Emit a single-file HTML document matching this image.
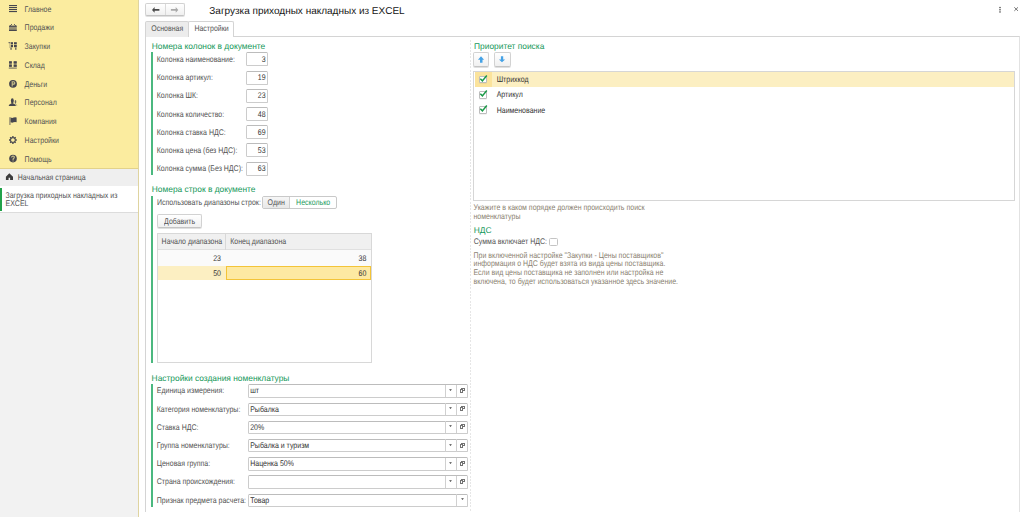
<!DOCTYPE html>
<html><head><meta charset="utf-8">
<style>
*{margin:0;padding:0;box-sizing:border-box}
html,body{width:1024px;height:517px;overflow:hidden;background:#fff;font-family:"Liberation Sans",sans-serif;color:#525252}
.a{position:absolute}
svg{position:absolute;overflow:visible}
.t{position:absolute;white-space:nowrap;font-size:7px;line-height:10px;transform:scaleY(1.18);transform-origin:0 0;text-rendering:geometricPrecision}
.h{position:absolute;white-space:nowrap;font-size:8.4px;line-height:10px;color:#16985a;text-rendering:geometricPrecision}
.ttl{position:absolute;white-space:nowrap;font-size:10px;line-height:12px;color:#161616;text-rendering:geometricPrecision}
.dk{color:#333}
.hint{color:#8a7f70}
.btn{position:absolute;border:1px solid #d2d2d2;border-bottom-color:#c4c4c4;border-radius:2px;background:linear-gradient(#ffffff,#f0f0f0);box-shadow:0 1px 0.5px rgba(0,0,0,.12)}
.box{position:absolute;border:1px solid #cccccc;border-top-color:#bcbcbc;border-radius:1.5px;background:#fff}
</style></head><body>
<div class="a" style="left:0px;top:0px;width:138px;height:517px;background:#f2f2f2"></div>
<div class="a" style="left:138px;top:0px;width:1px;height:517px;background:#dfd4a0"></div>
<div class="a" style="left:0px;top:0px;width:138px;height:168px;background:#fbec9f"></div>
<div class="a" style="left:0px;top:168px;width:138px;height:1px;background:#e3d28a"></div>
<div class="t" style="left:24.6px;top:4.50px;">Главное</div>
<div class="t" style="left:24.6px;top:23.28px;">Продажи</div>
<div class="t" style="left:24.6px;top:42.06px;">Закупки</div>
<div class="t" style="left:24.6px;top:60.84px;">Склад</div>
<div class="t" style="left:24.6px;top:79.62px;">Деньги</div>
<div class="t" style="left:24.6px;top:98.40px;">Персонал</div>
<div class="t" style="left:24.6px;top:117.18px;">Компания</div>
<div class="t" style="left:24.6px;top:135.96px;">Настройки</div>
<div class="t" style="left:24.6px;top:154.74px;">Помощь</div>
<div class="a" style="left:0px;top:169px;width:138px;height:17px;background:#efefef"></div>
<div class="t" style="left:17.8px;top:173.40px;">Начальная страница</div>
<div class="a" style="left:0px;top:186px;width:138px;height:26px;background:#fff"></div>
<div class="a" style="left:0px;top:212px;width:138px;height:1px;background:#dcdcdc"></div>
<div class="a" style="left:0.3px;top:187.5px;width:1.3px;height:23.5px;background:#22a24a"></div>
<div class="t" style="left:5.5px;top:191.20px;">Загрузка приходных накладных из</div>
<div class="t" style="left:5.5px;top:199.40px;">EXCEL</div>

<svg style="left:9px;top:5px" width="8" height="8"><g fill="#46464e"><rect x="0" y="0" width="8" height="1.1"/><rect x="0" y="2" width="8" height="1.1"/><rect x="0" y="4" width="8" height="1.1"/><rect x="0" y="6" width="8" height="1.1"/></g></svg>
<svg style="left:8px;top:23px" width="10" height="9"><g fill="#46464e"><rect x="1" y="2.6" width="7.8" height="1.3"/><rect x="1" y="3.9" width="7.8" height="3.2" opacity=".55"/><rect x="1" y="6.8" width="7.8" height="1.2"/></g><path d="M3.8 1.2 L2.3 2.8 M6.2 1.2 L7.6 2.8" stroke="#46464e" stroke-width="1" fill="none"/></svg>
<svg style="left:8px;top:41px" width="10" height="10"><g fill="#46464e"><rect x="0.5" y="1" width="1.8" height="1.2" opacity=".7"/><rect x="1.3" y="1.5" width="1" height="5.5" opacity=".3"/><rect x="2.8" y="1.2" width="2.2" height="2.2"/><rect x="6" y="1.2" width="2.8" height="2.2"/><rect x="2.8" y="4" width="2.2" height="2.2"/><rect x="6" y="4" width="2.8" height="2.2"/><rect x="2.3" y="6.5" width="1.5" height="2.3" opacity=".75"/><rect x="7" y="6.5" width="1.5" height="2.3" opacity=".75"/></g></svg>
<svg style="left:8px;top:60px" width="10" height="10"><g fill="#46464e"><rect x="1.1" y="1.3" width="2.7" height="5.5" opacity=".6"/><rect x="5.7" y="1.3" width="3" height="5.5" opacity=".6"/><rect x="1.1" y="1.3" width="2.7" height="2"/><rect x="5.7" y="1.3" width="3" height="2"/><rect x="1.1" y="4.9" width="2.7" height="1.9"/><rect x="5.7" y="4.9" width="3" height="1.9"/><rect x="0.8" y="7.5" width="8" height="1.2" opacity=".7"/></g></svg>
<svg style="left:8px;top:79px" width="10" height="10"><circle cx="5" cy="4.8" r="3.9" fill="#46464e"/><path d="M4.2 7.6 V2.7 H5.6 A1.2 1.2 0 0 1 5.6 5.1 H4.2" stroke="#c9c08a" stroke-width="1.1" fill="none"/></svg>
<svg style="left:8px;top:97px" width="10" height="10"><g fill="#46464e"><ellipse cx="4.3" cy="3.5" rx="1.4" ry="2.2"/><rect x="3.3" y="3.5" width="2" height="3.3"/><path d="M0.7 9 Q1 6.8 4.3 6.6 Q7.6 6.8 7.9 9 Z"/><ellipse cx="7.5" cy="4.8" rx="0.8" ry="1.7" opacity=".8"/><path d="M7.2 6.3 L8.8 8.6" stroke="#46464e" stroke-width=".9" opacity=".5"/></g></svg>
<svg style="left:8px;top:116px" width="10" height="10"><g fill="#46464e"><rect x="1.2" y="1.2" width="1.4" height="7.8" opacity=".55"/><path d="M2.6 1.6 Q4.3 2.5 5.6 1.6 Q7 0.8 8.6 1.4 V6.3 Q7 5.5 5.6 6.3 Q4.3 7.1 2.6 6.3 Z"/></g></svg>
<svg style="left:8px;top:135px" width="10" height="10"><g transform="translate(4.9,5)"><circle r="2.4" fill="none" stroke="#46464e" stroke-width="1.1" opacity=".85"/><g stroke="#46464e" stroke-width="1.4"><path d="M0 -3.9 V-2.2 M0 2.2 V3.9 M-3.9 0 H-2.2 M2.2 0 H3.9 M-2.75 -2.75 L-1.5 -1.5 M2.75 2.75 L1.5 1.5 M-2.75 2.75 L-1.5 1.5 M2.75 -2.75 L1.5 -1.5"/></g></g></svg>
<svg style="left:8px;top:154px" width="10" height="10"><circle cx="5" cy="4.6" r="3.8" fill="#46464e"/><path d="M3.6 3.5 Q3.7 2.1 5 2.1 Q6.4 2.2 6.3 3.4 Q6.2 4.3 5.1 4.9 V5.9" stroke="#c9c08a" stroke-width="1.1" fill="none"/><rect x="4.5" y="6.5" width="1.1" height="1" fill="#c9c08a"/></svg>
<svg style="left:5px;top:172px" width="9" height="9"><path d="M4.3 1.3 L8 4.8 V8 H5.1 V5.7 H3.6 V8 H0.9 V4.8 Z" fill="#3c3c3c"/></svg>

<div class="btn" style="left:145px;top:3px;width:40px;height:13px"></div>
<div class="a" style="left:165px;top:4px;width:1px;height:11px;background:#dadada"></div>
<svg style="left:151px;top:6px" width="10" height="8"><path d="M1 3.9 L3.6 1.1 V3 H8.4 V4.8 H3.6 V6.7 Z" fill="#4a4a4a"/></svg>
<svg style="left:170px;top:6px" width="10" height="8"><path d="M8.3 3.9 L5.7 1.1 V3 H0.9 V4.8 H5.7 V6.7 Z" fill="#a9a9a9"/></svg>
<div class="ttl" style="left:209.3px;top:5.60px">Загрузка приходных накладных из EXCEL</div>
<svg style="left:998px;top:6px" width="4" height="8"><g fill="#4a4a4a"><rect x="1.3" y="0.9" width="1.4" height="1.3"/><rect x="1.3" y="3.1" width="1.4" height="1.3"/><rect x="1.3" y="5.3" width="1.4" height="1.3"/></g></svg>
<svg style="left:1013px;top:6px" width="6" height="6"><path d="M1.3 1.3 L5 4.9 M5 1.3 L1.3 4.9" stroke="#555" stroke-width="0.8"/></svg>
<div class="a" style="left:145px;top:36px;width:875px;height:476px;border:1px solid #d4d4d4;border-bottom:none;border-right:1.5px solid #e2e2e2"></div>
<div class="a" style="left:145px;top:21px;width:44px;height:16px;background:#ececec;border:1px solid #d4d4d4;border-bottom:none;border-radius:2px 2px 0 0"></div>
<div class="a" style="left:188px;top:21px;width:46px;height:16px;background:#fff;border:1px solid #d4d4d4;border-bottom:none;border-radius:2px 2px 0 0"></div>
<div class="t" style="left:151.3px;top:24.00px;">Основная</div>
<div class="t" style="left:194.4px;top:24.00px;">Настройки</div>
<div class="h" style="left:151.7px;top:40.90px">Номера колонок в документе</div>
<div class="a" style="left:151px;top:52px;width:2px;height:122.5px;background:#4bb87f"></div>
<div class="t" style="left:156.8px;top:54.90px;">Колонка наименование:</div>
<div class="box" style="left:246px;top:52.30px;width:21.6px;height:14px"></div>
<div class="t" style="left:65.60000000000002px;width:200px;text-align:right;top:54.90px;color:#333">3</div>
<div class="t" style="left:156.8px;top:73.10px;">Колонка артикул:</div>
<div class="box" style="left:246px;top:70.50px;width:21.6px;height:14px"></div>
<div class="t" style="left:65.60000000000002px;width:200px;text-align:right;top:73.10px;color:#333">19</div>
<div class="t" style="left:156.8px;top:91.30px;">Колонка ШК:</div>
<div class="box" style="left:246px;top:88.70px;width:21.6px;height:14px"></div>
<div class="t" style="left:65.60000000000002px;width:200px;text-align:right;top:91.30px;color:#333">23</div>
<div class="t" style="left:156.8px;top:109.50px;">Колонка количество:</div>
<div class="box" style="left:246px;top:106.90px;width:21.6px;height:14px"></div>
<div class="t" style="left:65.60000000000002px;width:200px;text-align:right;top:109.50px;color:#333">48</div>
<div class="t" style="left:156.8px;top:127.70px;">Колонка ставка НДС:</div>
<div class="box" style="left:246px;top:125.10px;width:21.6px;height:14px"></div>
<div class="t" style="left:65.60000000000002px;width:200px;text-align:right;top:127.70px;color:#333">69</div>
<div class="t" style="left:156.8px;top:145.90px;">Колонка цена (без НДС):</div>
<div class="box" style="left:246px;top:143.30px;width:21.6px;height:14px"></div>
<div class="t" style="left:65.60000000000002px;width:200px;text-align:right;top:145.90px;color:#333">53</div>
<div class="t" style="left:156.8px;top:164.10px;">Колонка сумма (Без НДС):</div>
<div class="box" style="left:246px;top:161.50px;width:21.6px;height:14px"></div>
<div class="t" style="left:65.60000000000002px;width:200px;text-align:right;top:164.10px;color:#333">63</div>
<div class="h" style="left:151.8px;top:184.20px">Номера строк в документе</div>
<div class="a" style="left:151px;top:196px;width:2px;height:167px;background:#4bb87f"></div>
<div class="t" style="left:157px;top:198.10px;">Использовать диапазоны строк:</div>
<div class="a" style="left:262px;top:196px;width:75px;height:13.3px;border:1px solid #c9c9c9;border-radius:2px;background:#fff"></div>
<div class="a" style="left:263px;top:197px;width:27.3px;height:11.3px;background:linear-gradient(#f6f6f6,#e8e8e8);border-right:1px solid #d0d0d0"></div>
<div class="t" style="left:267.6px;top:198.10px;">Один</div>
<div class="t" style="left:296.1px;top:198.10px;color:#1e9b60">Несколько</div>
<div class="btn" style="left:156.7px;top:214.2px;width:45px;height:14.2px"></div>
<div class="t" style="left:164.1px;top:216.50px;">Добавить</div>
<div class="a" style="left:156.7px;top:233px;width:215px;height:130px;border:1px solid #d8d8d8;border-bottom-width:1.5px;background:#fff"></div>
<div class="a" style="left:157.7px;top:234px;width:213px;height:15.5px;background:#f0f0f0;border-bottom:1px solid #e0e0e0"></div>
<div class="a" style="left:225.4px;top:234px;width:1px;height:15.5px;background:#d8d8d8"></div>
<div class="t" style="left:161.6px;top:236.80px;">Начало диапазона</div>
<div class="t" style="left:230.2px;top:236.80px;">Конец диапазона</div>
<div class="a" style="left:157.7px;top:249.5px;width:213px;height:16px;background:#fafafa"></div>
<div class="t" style="left:21px;width:200px;text-align:right;top:253.80px;color:#333">23</div>
<div class="t" style="left:166.3px;width:200px;text-align:right;top:253.80px;color:#333">38</div>
<div class="a" style="left:157.7px;top:265.5px;width:213px;height:14px;background:#fcefc2"></div>
<div class="a" style="left:225.9px;top:265.7px;width:145.3px;height:14px;background:#fde9a2;border:1.2px solid #f3c438"></div>
<div class="t" style="left:21px;width:200px;text-align:right;top:268.90px;color:#333">50</div>
<div class="t" style="left:166.3px;width:200px;text-align:right;top:268.90px;color:#333">60</div>
<div class="h" style="left:151.6px;top:372.60px">Настройки создания номенклатуры</div>
<div class="a" style="left:151px;top:384px;width:2px;height:123px;background:#4bb87f"></div>
<div class="t" style="left:156.8px;top:386.40px;">Единица измерения:</div>
<div class="box" style="left:248.4px;top:384.30px;width:219.4px;height:13.6px"></div>
<div class="t" style="left:250.2px;top:386.40px;color:#333">шт</div>
<div class="a" style="left:445.4px;top:384.8px;width:1px;height:12.2px;background:#d0d0d0"></div>
<div class="a" style="left:456.4px;top:384.8px;width:1px;height:12.2px;background:#d0d0d0"></div>
<svg style="left:449px;top:389.00px" width="4" height="3"><path d="M0.1 0.2 H2.9 L1.5 2.1 Z" fill="#444"/></svg>
<svg style="left:459px;top:388px" width="7" height="6" shape-rendering="crispEdges"><g fill="#727272"><rect x="2" y="0" width="4" height="1"/><rect x="5" y="0" width="1" height="3"/><rect x="4" y="2" width="2" height="1"/><rect x="1" y="1" width="3" height="1"/><rect x="1" y="4" width="3" height="1"/><rect x="1" y="1" width="1" height="4"/><rect x="3" y="1" width="1" height="4"/></g></svg>
<div class="t" style="left:156.8px;top:404.60px;">Категория номенклатуры:</div>
<div class="box" style="left:248.4px;top:402.50px;width:219.4px;height:13.6px"></div>
<div class="t" style="left:250.2px;top:404.60px;color:#333">Рыбалка</div>
<div class="a" style="left:445.4px;top:403.0px;width:1px;height:12.2px;background:#d0d0d0"></div>
<div class="a" style="left:456.4px;top:403.0px;width:1px;height:12.2px;background:#d0d0d0"></div>
<svg style="left:449px;top:407.20px" width="4" height="3"><path d="M0.1 0.2 H2.9 L1.5 2.1 Z" fill="#444"/></svg>
<svg style="left:459px;top:406px" width="7" height="6" shape-rendering="crispEdges"><g fill="#727272"><rect x="2" y="0" width="4" height="1"/><rect x="5" y="0" width="1" height="3"/><rect x="4" y="2" width="2" height="1"/><rect x="1" y="1" width="3" height="1"/><rect x="1" y="4" width="3" height="1"/><rect x="1" y="1" width="1" height="4"/><rect x="3" y="1" width="1" height="4"/></g></svg>
<div class="t" style="left:156.8px;top:422.80px;">Ставка НДС:</div>
<div class="box" style="left:248.4px;top:420.70px;width:219.4px;height:13.6px"></div>
<div class="t" style="left:250.2px;top:422.80px;color:#333">20%</div>
<div class="a" style="left:445.4px;top:421.2px;width:1px;height:12.2px;background:#d0d0d0"></div>
<div class="a" style="left:456.4px;top:421.2px;width:1px;height:12.2px;background:#d0d0d0"></div>
<svg style="left:449px;top:425.40px" width="4" height="3"><path d="M0.1 0.2 H2.9 L1.5 2.1 Z" fill="#444"/></svg>
<svg style="left:459px;top:424px" width="7" height="6" shape-rendering="crispEdges"><g fill="#727272"><rect x="2" y="0" width="4" height="1"/><rect x="5" y="0" width="1" height="3"/><rect x="4" y="2" width="2" height="1"/><rect x="1" y="1" width="3" height="1"/><rect x="1" y="4" width="3" height="1"/><rect x="1" y="1" width="1" height="4"/><rect x="3" y="1" width="1" height="4"/></g></svg>
<div class="t" style="left:156.8px;top:441.00px;">Группа номенклатуры:</div>
<div class="box" style="left:248.4px;top:438.90px;width:219.4px;height:13.6px"></div>
<div class="t" style="left:250.2px;top:441.00px;color:#333">Рыбалка и туризм</div>
<div class="a" style="left:445.4px;top:439.4px;width:1px;height:12.2px;background:#d0d0d0"></div>
<div class="a" style="left:456.4px;top:439.4px;width:1px;height:12.2px;background:#d0d0d0"></div>
<svg style="left:449px;top:443.60px" width="4" height="3"><path d="M0.1 0.2 H2.9 L1.5 2.1 Z" fill="#444"/></svg>
<svg style="left:459px;top:443px" width="7" height="6" shape-rendering="crispEdges"><g fill="#727272"><rect x="2" y="0" width="4" height="1"/><rect x="5" y="0" width="1" height="3"/><rect x="4" y="2" width="2" height="1"/><rect x="1" y="1" width="3" height="1"/><rect x="1" y="4" width="3" height="1"/><rect x="1" y="1" width="1" height="4"/><rect x="3" y="1" width="1" height="4"/></g></svg>
<div class="t" style="left:156.8px;top:459.20px;">Ценовая группа:</div>
<div class="box" style="left:248.4px;top:457.10px;width:219.4px;height:13.6px"></div>
<div class="t" style="left:250.2px;top:459.20px;color:#333">Наценка 50%</div>
<div class="a" style="left:445.4px;top:457.6px;width:1px;height:12.2px;background:#d0d0d0"></div>
<div class="a" style="left:456.4px;top:457.6px;width:1px;height:12.2px;background:#d0d0d0"></div>
<svg style="left:449px;top:461.80px" width="4" height="3"><path d="M0.1 0.2 H2.9 L1.5 2.1 Z" fill="#444"/></svg>
<svg style="left:459px;top:461px" width="7" height="6" shape-rendering="crispEdges"><g fill="#727272"><rect x="2" y="0" width="4" height="1"/><rect x="5" y="0" width="1" height="3"/><rect x="4" y="2" width="2" height="1"/><rect x="1" y="1" width="3" height="1"/><rect x="1" y="4" width="3" height="1"/><rect x="1" y="1" width="1" height="4"/><rect x="3" y="1" width="1" height="4"/></g></svg>
<div class="t" style="left:156.8px;top:477.40px;">Страна происхождения:</div>
<div class="box" style="left:248.4px;top:475.30px;width:219.4px;height:13.6px"></div>
<div class="a" style="left:445.4px;top:475.8px;width:1px;height:12.2px;background:#d0d0d0"></div>
<div class="a" style="left:456.4px;top:475.8px;width:1px;height:12.2px;background:#d0d0d0"></div>
<svg style="left:449px;top:480.00px" width="4" height="3"><path d="M0.1 0.2 H2.9 L1.5 2.1 Z" fill="#444"/></svg>
<svg style="left:459px;top:479px" width="7" height="6" shape-rendering="crispEdges"><g fill="#727272"><rect x="2" y="0" width="4" height="1"/><rect x="5" y="0" width="1" height="3"/><rect x="4" y="2" width="2" height="1"/><rect x="1" y="1" width="3" height="1"/><rect x="1" y="4" width="3" height="1"/><rect x="1" y="1" width="1" height="4"/><rect x="3" y="1" width="1" height="4"/></g></svg>
<div class="t" style="left:156.8px;top:495.60px;">Признак предмета расчета:</div>
<div class="box" style="left:248.4px;top:493.50px;width:219.4px;height:13.6px"></div>
<div class="t" style="left:250.2px;top:495.60px;color:#333">Товар</div>
<div class="a" style="left:456.4px;top:494.0px;width:1px;height:12.2px;background:#d0d0d0"></div>
<svg style="left:460.5px;top:498.20px" width="4" height="3"><path d="M0.1 0.2 H2.9 L1.5 2.1 Z" fill="#444"/></svg>
<div class="a" style="left:470px;top:40px;width:1px;height:472px;background:repeating-linear-gradient(#e6e6e6 0 2px,transparent 2px 3.3px)"></div>
<div class="h" style="left:474.1px;top:40.80px">Приоритет поиска</div>
<div class="btn" style="left:473.3px;top:52.4px;width:16.2px;height:14.6px"></div>
<div class="btn" style="left:494.4px;top:52.4px;width:16.2px;height:14.6px"></div>
<svg style="left:477px;top:55px" width="9" height="9"><path d="M4 1.2 L7.1 4.8 H5.5 V7.7 H3 V4.8 H1 Z" fill="#45a2e6"/></svg>
<svg style="left:498px;top:55px" width="9" height="9"><path d="M4 7.3 L7.1 4.5 H5.2 V1.2 H2.9 V4.5 H0.9 Z" fill="#45a2e6"/></svg>
<div class="a" style="left:473px;top:71px;width:541.5px;height:129.8px;border:1px solid #d6d6d6;border-bottom-width:1.5px;background:#fff"></div>
<div class="a" style="left:474.5px;top:72.4px;width:539px;height:14.6px;background:#fcefc2"></div>
<div class="a" style="left:474.5px;top:72.4px;width:17.6px;height:14.6px;background:#fbe39c"></div>
<div class="t" style="left:496.7px;top:74.90px;color:#333">Штрихкод</div>
<div class="a" style="left:479px;top:75.70px;width:7.7px;height:7.5px;border:1px solid #bdbdbd;border-radius:1px;background:#fff;box-shadow:0 0.5px 0 rgba(0,0,0,.1)"></div>
<svg style="left:479px;top:74.70px" width="9" height="9"><path d="M1.3 3.8 L3.4 5.9 L7.8 0.5" stroke="#1a9a48" stroke-width="1.5" fill="none"/></svg>
<div class="t" style="left:496.7px;top:90.20px;color:#333">Артикул</div>
<div class="a" style="left:479px;top:91.00px;width:7.7px;height:7.5px;border:1px solid #bdbdbd;border-radius:1px;background:#fff;box-shadow:0 0.5px 0 rgba(0,0,0,.1)"></div>
<svg style="left:479px;top:90.00px" width="9" height="9"><path d="M1.3 3.8 L3.4 5.9 L7.8 0.5" stroke="#1a9a48" stroke-width="1.5" fill="none"/></svg>
<div class="t" style="left:496.7px;top:105.50px;color:#333">Наименование</div>
<div class="a" style="left:479px;top:106.30px;width:7.7px;height:7.5px;border:1px solid #bdbdbd;border-radius:1px;background:#fff;box-shadow:0 0.5px 0 rgba(0,0,0,.1)"></div>
<svg style="left:479px;top:105.30px" width="9" height="9"><path d="M1.3 3.8 L3.4 5.9 L7.8 0.5" stroke="#1a9a48" stroke-width="1.5" fill="none"/></svg>
<div class="t" style="left:473.5px;top:202.90px;color:#8a7f70">Укажите в каком порядке должен происходить поиск</div>
<div class="t" style="left:473.5px;top:211.50px;color:#8a7f70">номенклатуры</div>
<div class="h" style="left:473.8px;top:224.90px">НДС</div>
<div class="t" style="left:473.8px;top:236.80px;">Сумма включает НДС:</div>
<div class="a" style="left:549.3px;top:237.6px;width:8.6px;height:8px;border:1px solid #c4c4c4;border-radius:1.5px;background:#fff"></div>
<div class="t" style="left:473.5px;top:250.80px;color:#8a7f70">При включенной настройке "Закупки - Цены поставщиков"</div>
<div class="t" style="left:473.5px;top:259.40px;color:#8a7f70">информация о НДС будет взята из вида цены поставщика.</div>
<div class="t" style="left:473.5px;top:268.00px;color:#8a7f70">Если вид цены поставщика не заполнен или настройка не</div>
<div class="t" style="left:473.5px;top:276.60px;color:#8a7f70">включена, то будет использоваться указанное здесь значение.</div>
</body></html>
